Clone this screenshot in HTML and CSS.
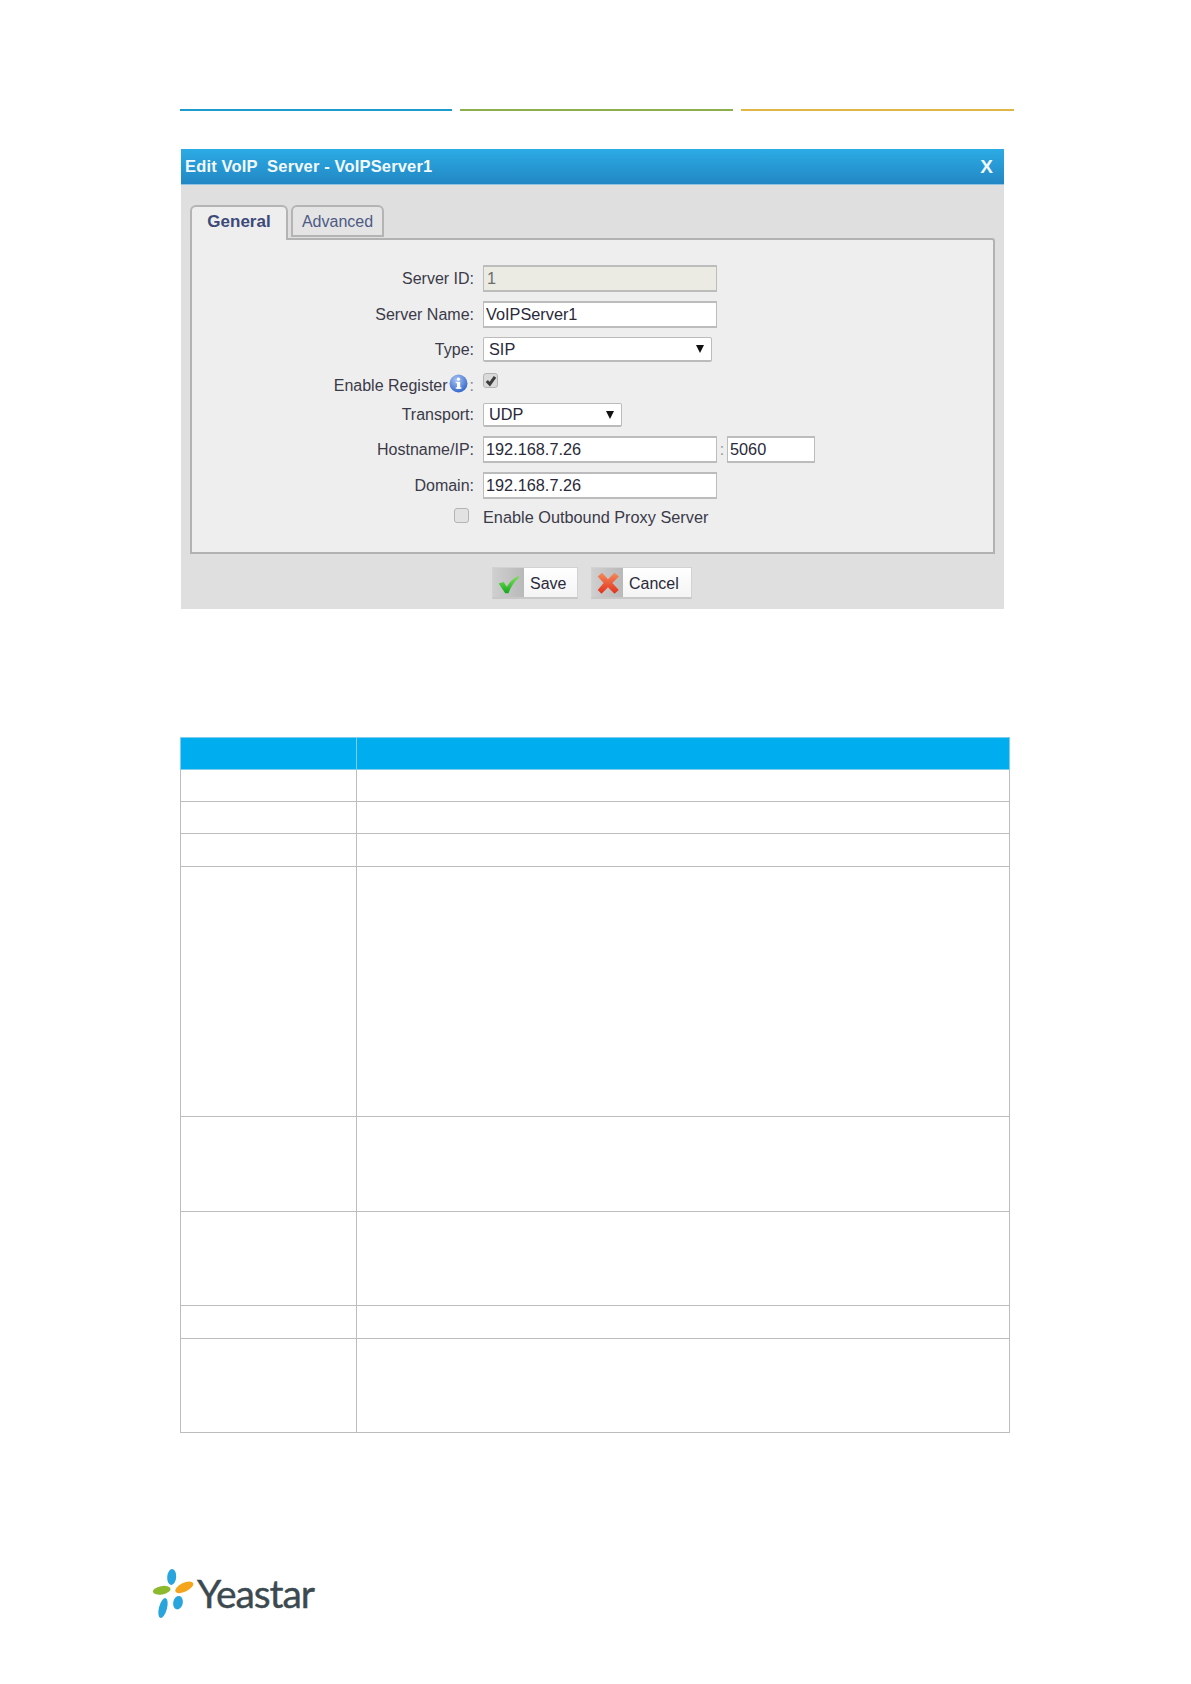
FILE: index.html
```html
<!DOCTYPE html>
<html lang="en">
<head>
<meta charset="utf-8">
<title>Edit VoIP Server</title>
<link rel="stylesheet" href="styles.css">
</head>
<body>
<div class="page">
  <div class="rules">
    <div class="rule rule-blue"></div>
    <div class="rule rule-green"></div>
    <div class="rule rule-yellow"></div>
  </div>

  <section class="dialog">
    <header class="dialog-head">
      <span class="dialog-title">Edit VoIP&nbsp; Server - VoIPServer1</span>
      <span class="close">X</span>
    </header>
    <div class="dialog-body">
      <div class="tabs">
        <div class="tab tab-active">General</div>
        <div class="tab">Advanced</div>
      </div>
      <div class="panel">
        <div class="row row-id">
          <span class="label">Server ID:</span>
          <span class="input input-wide input-disabled">1</span>
        </div>
        <div class="row row-name">
          <span class="label">Server Name:</span>
          <span class="input input-wide">VoIPServer1</span>
        </div>
        <div class="row row-type">
          <span class="label">Type:</span>
          <span class="select select-wide">SIP<i class="arrow"></i></span>
        </div>
        <div class="row row-reg">
          <span class="label label-reg">Enable Register<svg class="info" viewBox="0 0 18 18" width="19" height="19"><defs><radialGradient id="ig" cx="40%" cy="30%" r="75%"><stop offset="0" stop-color="#a9c4f2"/><stop offset="1" stop-color="#2e63c8"/></radialGradient></defs><circle cx="9" cy="9" r="8.5" fill="url(#ig)"/><rect x="7.6" y="7.4" width="3" height="6.4" fill="#fff"/><rect x="6.4" y="7.4" width="2" height="1.3" fill="#fff"/><rect x="6.4" y="12.6" width="5.4" height="1.4" fill="#fff"/><circle cx="9" cy="4.9" r="1.5" fill="#fff"/></svg><span class="colon">:</span></span>
          <span class="check check-on"><svg viewBox="0 0 14 14" width="14" height="14"><path d="M2.8 7 5.8 10.2 11 2.8" fill="none" stroke="#3c3c3c" stroke-width="3"/></svg></span>
        </div>
        <div class="row row-transport">
          <span class="label">Transport:</span>
          <span class="select select-narrow">UDP<i class="arrow"></i></span>
        </div>
        <div class="row row-host">
          <span class="label">Hostname/IP:</span>
          <span class="input input-wide">192.168.7.26</span>
          <span class="sep">:</span>
          <span class="input input-port">5060</span>
        </div>
        <div class="row row-domain">
          <span class="label">Domain:</span>
          <span class="input input-wide">192.168.7.26</span>
        </div>
        <div class="row row-proxy">
          <span class="label label-box"><span class="check"></span></span>
          <span class="proxy-text">Enable Outbound Proxy Server</span>
        </div>
      </div>
      <div class="actions">
        <div class="btn btn-save">
          <span class="btn-icon"><svg viewBox="0 0 24 24" width="26" height="26"><defs><linearGradient id="cg" x1="0" y1="0" x2="0" y2="1"><stop offset="0" stop-color="#7fe05a"/><stop offset="1" stop-color="#12a81e"/></linearGradient></defs><path d="M2.5 12.5 7 11 10 15.5C12.5 11 16 7.5 20.5 5.5L21.5 7C17 10.5 14 15 11.5 21.5H8.5Z" fill="url(#cg)"/></svg></span>
          <span class="btn-text">Save</span>
        </div>
        <div class="btn btn-cancel">
          <span class="btn-icon"><svg viewBox="0 0 24 24" width="26" height="26"><defs><linearGradient id="xg" x1="0" y1="0" x2="0" y2="1"><stop offset="0" stop-color="#f58a5a"/><stop offset="1" stop-color="#e2301c"/></linearGradient></defs><path d="M2.5 6 6.5 2.5 12 8.5 18 2.5 22 6 16 12 22 18.5 18 22 12 16 6 22 2.5 18.5 8 12Z" fill="url(#xg)"/></svg></span>
          <span class="btn-text">Cancel</span>
        </div>
      </div>
    </div>
  </section>

  <table class="spec">
    <colgroup><col class="col-a"><col></colgroup>
    <tr class="h-head"><th></th><th></th></tr>
    <tr class="h-32"><td></td><td></td></tr>
    <tr class="h-32"><td></td><td></td></tr>
    <tr class="h-33"><td></td><td></td></tr>
    <tr class="h-250"><td></td><td></td></tr>
    <tr class="h-95"><td></td><td></td></tr>
    <tr class="h-94"><td></td><td></td></tr>
    <tr class="h-33"><td></td><td></td></tr>
    <tr class="h-94"><td></td><td></td></tr>
  </table>

  <footer class="logo">
    <svg class="logo-mark" viewBox="0 0 42 52" width="42" height="52">
      <ellipse cx="19.7" cy="10" rx="4.5" ry="8" fill="#29a5de" transform="rotate(4 19.7 10)"/>
      <ellipse cx="9.7" cy="23.3" rx="9" ry="4.2" fill="#8cb92e" transform="rotate(-10 9.7 23.3)"/>
      <ellipse cx="32.3" cy="20.3" rx="9.8" ry="4.4" fill="#f4a51c" transform="rotate(-26 32.3 20.3)"/>
      <ellipse cx="26" cy="35.7" rx="4.8" ry="6.8" fill="#29a5de" transform="rotate(12 26 35.7)"/>
      <ellipse cx="11" cy="41" rx="4" ry="10.2" fill="#29a5de" transform="rotate(15 11 41)"/>
    </svg>
    <span class="logo-text">Yeastar</span>
  </footer>
</div>
</body>
</html>
```
FILE: styles.css
```css
* { box-sizing: border-box; }
html, body { margin: 0; padding: 0; background: #fff; }
body { font-family: "Liberation Sans", Arial, sans-serif; color: #2b2b3a; }
.page { width: 1191px; height: 1684px; padding-top: 109px; overflow: hidden; }

.rules { display: flex; gap: 8px; margin-left: 180px; width: 834px; }
.rule { height: 2px; width: 273px; flex: none; }
.rule-blue { background: #1c9ccb; width: 272px; }
.rule-green { background: #8cae4f; }
.rule-yellow { background: #e0b746; }

.dialog { width: 823px; height: 460px; margin: 38px 0 0 181px; background: #dfdfdf; }
.dialog-head {
  height: 36px; display: flex; justify-content: space-between; align-items: center;
  padding: 0 11px 0 4px; color: #f2f9fd; font-weight: bold; font-size: 16.5px;
  background: linear-gradient(#2cabe4, #2287c4); border-bottom: 1px solid #8fc3e2;
}
.dialog-title { letter-spacing: 0.16px; }
.close { font-size: 19px; }
.dialog-body { padding: 20px 9px 0; }

.tabs { display: flex; gap: 3px; height: 33px; position: relative; z-index: 1; }
.tab {
  width: 93px; height: 32px; border: 2px solid #b4b4b4;
  border-radius: 6px 6px 0 0; background: #e4e4e4;
  color: #4d5a84; font-size: 16px; text-align: center; line-height: 29px;
}
.tab-active {
  width: 98px; height: 35px; background: #eee; border-bottom: 0;
  color: #3c4a78; font-weight: bold; font-size: 17px; line-height: 30px;
}
.panel {
  width: 805px; height: 316px; padding-top: 25px; background: #eee;
  border: 2px solid #b2b2b2; border-radius: 0 3px 0 0;
  font-size: 16px; position: relative;
}
.row { display: flex; align-items: center; }
.label { width: 282px; text-align: right; color: #3a3a48; flex: none; }
.label-reg { display: flex; justify-content: flex-end; align-items: flex-start; padding-top: 4px; }
.label-box { display: flex; justify-content: flex-end; padding-right: 5px; }
.input, .select { flex: none; background: #fff; color: #2a2a3a; margin-left: 9px; white-space: nowrap; }
.input { height: 27px; border: 2px solid #bcbcbc; border-width: 2px 1px; line-height: 23px; padding-left: 2px; font-size: 16.3px; }
.input-wide { width: 234px; }
.input-disabled { background: #ebebe4; color: #6d6d6d; padding-left: 3px; }
.input-port { width: 88px; margin-left: 0; }
.sep { width: 10px; color: #999; text-align: center; flex: none; }
.select {
  height: 25px; border: 1px solid #bbb; border-bottom-width: 2px; border-radius: 2px; line-height: 22px;
  padding-left: 5px; font-size: 16.3px; position: relative;
}
.select-wide { width: 229px; }
.select-narrow { width: 139px; height: 24px; line-height: 21px; }
.arrow {
  position: absolute; right: 7px; top: 7px; width: 0; height: 0;
  border-left: 4px solid transparent; border-right: 4px solid transparent; border-top: 8px solid #111;
}
.row-name, .row-type, .row-host, .row-domain { margin-top: 9px; }
.row-reg { margin-top: 11px; height: 30px; align-items: flex-start; }
.info { margin-top: -3px; margin-left: 1px; }
.colon { color: #888; margin-left: 2px; }
.row-reg .check { margin-left: 9px; }
.check {
  display: block; width: 15px; height: 15px; flex: none; background: #e2e2e2;
  border: 1px solid #b4b4b4; border-radius: 3px;
}
.check-on { background: #dadada; }
.check svg { display: block; }
.row-proxy { margin-top: 9px; align-items: flex-start; }
.proxy-text { margin-left: 9px; color: #3a3a48; font-size: 16.3px; }

.actions { display: flex; gap: 13px; margin-top: 13px; margin-left: 302px; }
.btn {
  display: flex; height: 32px; background: linear-gradient(#fff, #f4f4f4);
  border: 1px solid #d2d2d2; border-bottom: 2px solid #c8c8c8; font-size: 16px; color: #2a2a3a;
}
.btn-save { width: 86px; }
.btn-cancel { width: 101px; }
.btn-icon {
  width: 31px; flex: none; background: linear-gradient(90deg, #cfcfcf, #b9b9b9);
  display: flex; align-items: center; justify-content: center;
}
.btn-text { padding-left: 6px; line-height: 31px; }

.spec { border-collapse: collapse; table-layout: fixed; width: 830px; margin: 128px 0 0 180px; }
.col-a { width: 176px; }
.spec th, .spec td { border: 1px solid #bdbdbd; padding: 0; }
.spec th { background: #00adef; border-color: #7fcdec; }
.h-head { height: 32px; }
.h-32 { height: 32px; }
.h-33 { height: 33px; }
.h-250 { height: 250px; }
.h-95 { height: 95px; }
.h-94 { height: 94px; }

.logo { display: flex; align-items: flex-start; margin: 134px 0 0 152px; height: 52px; }
.logo-mark { flex: none; }
.logo-text {
  font-family: "Lato", sans-serif; font-size: 39px; line-height: 50px; color: #3c4a50;
  letter-spacing: -1.1px; margin: 1px 0 0 3px; -webkit-text-stroke: 0.4px #3c4a50;
}
```
